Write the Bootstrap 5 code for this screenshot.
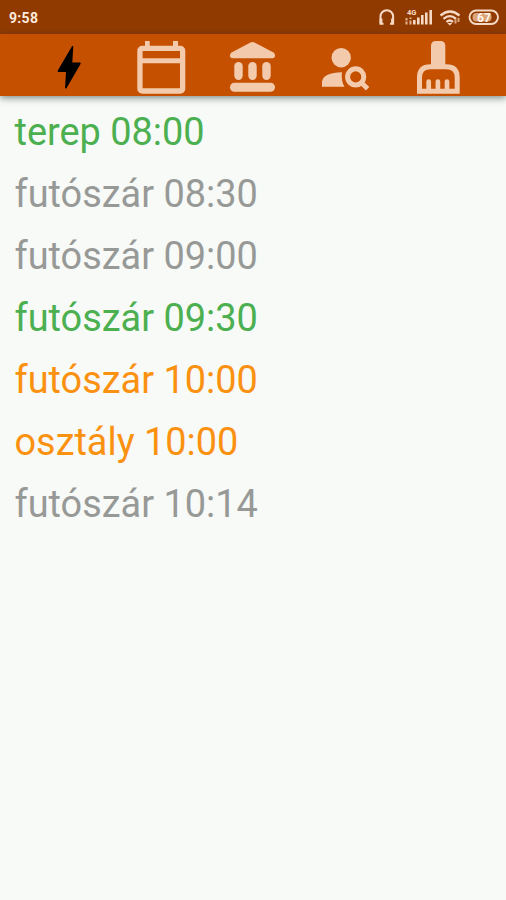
<!DOCTYPE html>
<html lang="hu">
<head>
<meta charset="utf-8">
<meta name="viewport" content="width=device-width, initial-scale=1">
<title>Napi lista</title>
<link href="https://cdn.jsdelivr.net/npm/bootstrap@5.3.0/dist/css/bootstrap.min.css" rel="stylesheet">
<style>
body { background: #f7faf7; font-family: Roboto, sans-serif; min-height: 900px; overflow: hidden; }
.statusbar { height: 34px; background: #913a00; color: #fdeadd; padding: 0 6px 0 9px; font-size: 14px; letter-spacing: .3px; }
.clock { padding-top: 2px; }
.toolbar { height: 62px; background: #c45000; padding: 0 23px; box-shadow: 0 2px 7px rgba(30,50,45,.55); }
.tool { width: 92px; height: 62px; color: #f3cbac; }
.tool.active { color: #000; }
.tool svg { display: block; }
.entries { padding: 6px 14.5px; font-size: 37.9px; }
.entries li { height: 62px; line-height: 60px; white-space: nowrap; }
.done { color: #4caf50; }
.idle { color: #979997; }
.soon { color: #fb9110; }
</style>
<script src="https://cdn.jsdelivr.net/npm/bootstrap@5.3.0/dist/js/bootstrap.bundle.min.js"></script>
</head>
<body>
<header>
  <div class="statusbar d-flex align-items-center justify-content-between">
    <span class="clock fw-bold">9:58</span>
    <svg width="130" height="34" viewBox="370 0 130 34" fill="none" stroke="#f6d9c4" letter-spacing="0">
      <path d="M383.500 23.800H380.500V16.500a6.300 6.300 0 0 1 12.600 0V23.800H390" stroke-width="2"/>
      <path d="M381 18.500v5M392.500 18.500v5" stroke-width="2.800"/>
      <text x="407" y="15" font-family="Roboto, sans-serif" font-size="7.500" font-weight="700" fill="#f6d9c4" stroke="none">4G</text>
      <path d="M406.500 18v2.500M406.500 21.500v3M410.500 17.500v1.500M410.500 20.500v4" stroke-width="2" stroke="#e3b493"/>
      <path d="M414.300 20V24.500M418.300 17.500V24.500M422.300 15V24.500M426.300 12.500V24.500M430.700 10V24.500" stroke-width="2.600"/>
      <path d="M440.500 15.500q9.500-8 19 0M443.500 18.900q6.500-5.500 12.500 0M446.500 22q3.200-3 6.500 0" stroke-width="2.300"/>
      <path d="M449.800 25.500l-2.500-2.500h5z" fill="#f6d9c4" stroke="none"/>
      <path d="M455.500 19.500v4M458.500 18v4" stroke="#d9a883" stroke-width="2"/>
      <rect x="469.500" y="10.500" width="28.500" height="13.500" rx="6.700" stroke-width="1.900"/>
      <rect x="472.500" y="13" width="19" height="8.500" rx="4" fill="#dba47a" stroke="none"/>
      <text x="484" y="21.500" text-anchor="middle" font-family="Roboto, sans-serif" font-size="12" font-weight="700" fill="#fff4ea" stroke="none">67</text>
    </svg>
  </div>
  <nav class="toolbar d-flex">
    <a class="tool active" href="#" aria-label="Most">
      <svg width="92" height="62" fill="currentColor" stroke="currentColor" stroke-linejoin="round"><path d="M49.500 12.800L35.300 37.200H43.800L42.800 53.800L57 29.300H48.500Z" stroke-width="1.500"/></svg>
    </a>
    <a class="tool" href="#" aria-label="Naptár">
      <svg width="92" height="62" fill="currentColor"><path fill-rule="evenodd" d="M30 7h4.700v4.700H58V7h5v4.700h2.300a5 5 0 0 1 5 5v38a5 5 0 0 1-5 5h-38a5 5 0 0 1-5-5v-38a5 5 0 0 1 5-5H30ZM27.600 17v7.200H65V17ZM27.600 29.300V54.200H65V29.300Z"/></svg>
    </a>
    <a class="tool" href="#" aria-label="Intézmény">
      <svg width="92" height="62" fill="currentColor"><path d="M43.500 8.500q2-1 4 0L66 18.300q2 1.100 2 3.200 0 2.700-2.700 2.700H25.700Q23 24.200 23 21.500q0-2.100 2-3.200Z"/><rect x="27.300" y="28" width="8.400" height="18" rx="4.200"/><rect x="41.300" y="28" width="8.400" height="18" rx="4.200"/><rect x="55.300" y="28" width="8.400" height="18" rx="4.200"/><rect x="23" y="48.700" width="45" height="9" rx="4.500"/></svg>
    </a>
    <a class="tool" href="#" aria-label="Személy keresése">
      <svg width="92" height="62" fill="currentColor"><circle cx="42.200" cy="23.700" r="9.700"/><path d="M43 38.300Q41.800 47 45.500 52.700H23V47.500Q24.500 38.800 43 38.300Z"/><circle cx="56.700" cy="42.900" r="8.100" fill="none" stroke="currentColor" stroke-width="5"/><path d="M61.500 47.700L68.600 54.800" stroke="currentColor" stroke-width="4.800"/></svg>
    </a>
    <a class="tool" href="#" aria-label="Takarítás">
      <svg width="92" height="62" fill="currentColor"><path d="M40 32V12q0-5 5-5h4.300q5 0 5 5V32Z"/><path d="M28.500 57.300V43.500Q28.500 32.800 39.500 32.800H55.200Q66.200 32.800 66.200 43.500V57.300Z" fill="none" stroke="currentColor" stroke-width="5"/><path d="M37.700 57V47.500M46.900 57V47.500M56 57V47.500" stroke="currentColor" stroke-width="4.700" stroke-linecap="round"/></svg>
    </a>
  </nav>
</header>
<main>
  <ul class="entries list-unstyled mb-0">
    <li class="done">terep 08:00</li>
    <li class="idle">futószár 08:30</li>
    <li class="idle">futószár 09:00</li>
    <li class="done">futószár 09:30</li>
    <li class="soon">futószár 10:00</li>
    <li class="soon">osztály 10:00</li>
    <li class="idle">futószár 10:14</li>
  </ul>
</main>
</body>
</html>
